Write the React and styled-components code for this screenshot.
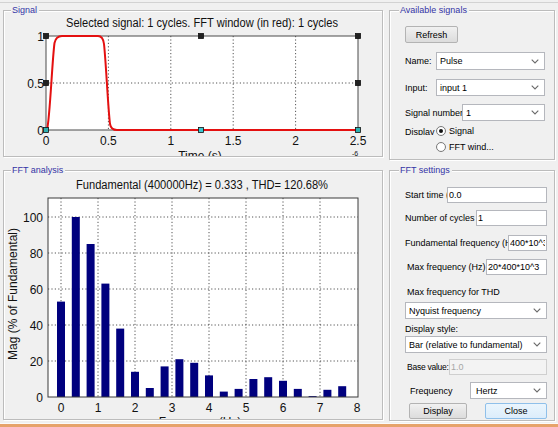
import React from "react";
import styled, { createGlobalStyle } from "styled-components";

const Global = createGlobalStyle`
  html, body {
    margin: 0;
    padding: 0;
    background: #f0f0f0;
  }
  body {
    font-family: "Liberation Sans", Arial, sans-serif;
  }
`;

const Window = styled.div`
  width: 558px;
  height: 427px;
  overflow: hidden;
  background: #f0f0f0;
  display: flex;
  flex-direction: column;
`;

const TopEdge = styled.div`
  height: 2px;
  border-bottom: 1px solid #d2d2d2;
  flex: none;
`;

const Body = styled.div`
  display: grid;
  grid-template-columns: 380px 166px;
  column-gap: 6px;
  padding: 7px 3px 0 3px;
  flex: none;
`;

const Column = styled.div`
  display: flex;
  flex-direction: column;
  gap: ${(p) => p.$gap}px;
`;

const BottomEdge = styled.div`
  margin-top: auto;
  height: 3px;
  border-top: 1px solid #fbfbfb;
  background: #e6a36b;
  flex: none;
`;

const Panel = styled.div`
  position: relative;
  box-sizing: border-box;
  height: ${(p) => p.$h}px;
  border: 1px solid #bcbcbc;
  box-shadow: inset 1px 1px 0 #ffffff, 1px 1px 0 #ffffff;
`;

const Legend = styled.span`
  position: absolute;
  top: -6px;
  left: ${(p) => p.$left || 7}px;
  padding: 0 2px 0 1px;
  background: #f0f0f0;
  color: #3434a6;
  font-size: 9px;
  line-height: 11px;
  white-space: nowrap;
`;

const Chart = styled.svg`
  display: block;
  font-family: "Liberation Sans", Arial, sans-serif;
`;

const Form = styled.div`
  display: flex;
  flex-direction: column;
  padding-left: 15px;
  font-size: 9px;
  color: #000;
`;

const Row = styled.div`
  display: flex;
  align-items: center;
  height: ${(p) => p.$h}px;
  margin-top: ${(p) => p.$mt}px;
  margin-left: ${(p) => p.$ml || 0}px;
  gap: ${(p) => p.$gap || 0}px;
`;

const FieldLabel = styled.span`
  flex: none;
  width: ${(p) => (p.$w ? `${p.$w}px` : "auto")};
  overflow: hidden;
  white-space: nowrap;
  font-size: ${(p) => p.$fs || 9}px;
  letter-spacing: ${(p) => p.$ls || 0}px;
`;

const TextBox = styled.input`
  flex: none;
  box-sizing: border-box;
  width: ${(p) => p.$w}px;
  height: 100%;
  margin: 0;
  padding: 0 1px;
  border: 1px solid ${(p) => (p.disabled ? "#cfcfcf" : "#b5b7bd")};
  background: ${(p) => (p.disabled ? "#f3f3f3" : "#ffffff")};
  color: ${(p) => (p.disabled ? "#a6a6a6" : "#000")};
  font-family: "Liberation Sans", Arial, sans-serif;
  font-size: 9px;
  outline: none;
`;

const DropDown = styled.div`
  flex: none;
  box-sizing: border-box;
  width: ${(p) => p.$w}px;
  height: 100%;
  display: flex;
  align-items: center;
  justify-content: space-between;
  padding: 0 5px 0 ${(p) => p.$pad || 3}px;
  border: 1px solid #b5b7bd;
  background: #ffffff;
  font-size: 9px;
  white-space: nowrap;
  overflow: hidden;
`;

const Button = styled.div`
  flex: none;
  box-sizing: border-box;
  width: ${(p) => p.$w}px;
  height: ${(p) => p.$h || 16}px;
  display: flex;
  align-items: center;
  justify-content: center;
  font-size: 9px;
  border: 1px solid ${(p) => (p.$focus ? "#8fc0ea" : "#b3b3b3")};
  border-radius: 2px;
  background: ${(p) =>
    p.$focus
      ? "linear-gradient(#eaf5fd, #dcedfb)"
      : "linear-gradient(#f1f1f1, #e6e6e6 50%, #dcdcdc)"};
`;

const ClippedLabel = styled.span`
  flex: none;
  width: ${(p) => p.$w}px;
  height: 7px;
  overflow: hidden;
  white-space: nowrap;
  font-size: 9px;
  line-height: 9px;
  align-self: flex-start;
  margin-top: 4px;
`;

const RadioGroup = styled.div`
  display: flex;
  flex-direction: column;
  gap: 3px;
`;

const RadioRow = styled.div`
  display: flex;
  align-items: center;
  height: 13px;
  gap: 3px;
  font-size: 9px;
`;

const RadioDot = styled.span`
  flex: none;
  box-sizing: border-box;
  width: 10px;
  height: 10px;
  border-radius: 50%;
  border: 1px solid #7a7a7a;
  background: radial-gradient(circle, #ffffff 55%, #e4e4e4);
  display: flex;
  align-items: center;
  justify-content: center;
  &::after {
    content: "";
    width: 4px;
    height: 4px;
    border-radius: 50%;
    background: ${(p) => (p.$on ? "#111" : "transparent")};
  }
`;

const Chevron = () => (
  <svg width="8" height="5" viewBox="0 0 8 5">
    <polyline points="0.7,0.7 4,4 7.3,0.7" fill="none" stroke="#6a6a6a" strokeWidth="1.1" />
  </svg>
);

const Select = ({ w, pad, children }) => (
  <DropDown $w={w} $pad={pad}>
    <span>{children}</span>
    <Chevron />
  </DropDown>
);

const GRID = { stroke: "#2a2a2a", strokeWidth: 0.8, strokeDasharray: "1.2 2.2" };

const Handle = ({ x, y, fill }) => (
  <rect x={x - 2.5} y={y - 2.5} width="5" height="5" fill={fill || "#222"} stroke="#111" strokeWidth="0.8" />
);

const SignalChart = () => {
  const sx = (t) => 46 + t * 124.8;
  const sy = (v) => 130 - v * 94;
  const xt = [0, 0.5, 1, 1.5, 2, 2.5];
  const yt = [
    [0, "0"],
    [0.5, "0.5"],
    [1, "1"],
  ];
  return (
    <Chart width="378" height="145" viewBox="4 11 378 145">
      <text x="202" y="27" fontSize="12" textAnchor="middle" textLength="272" lengthAdjust="spacingAndGlyphs" fill="#111">
        Selected signal: 1 cycles. FFT window (in red): 1 cycles
      </text>
      <rect x="46" y="36" width="312" height="94" fill="#fff" />
      {xt.slice(1, -1).map((t) => (
        <line key={t} x1={sx(t)} x2={sx(t)} y1="36" y2="130" {...GRID} />
      ))}
      <line x1="46" x2="358" y1={sy(0.5)} y2={sy(0.5)} {...GRID} />
      <rect x="46" y="36" width="312" height="94" fill="none" stroke="#4a4a4a" strokeWidth="1" />
      <path
        d="M47,130 C50,118 52,62 54.5,43 Q56,36 62,36 L98,36 Q103,36 104,44 C106,62 108,108 110,124 Q111,130 117,130 L358,130"
        fill="none"
        stroke="#e41010"
        strokeWidth="2"
      />
      {xt.map((t) => (
        <text key={t} x={sx(t)} y="145" fontSize="12" textAnchor="middle" fill="#111">
          {t}
        </text>
      ))}
      {yt.map(([v, l]) => (
        <text key={l} x="44" y={sy(v) + 4.5} fontSize="12" textAnchor="end" fill="#111">
          {l}
        </text>
      ))}
      <text x="200" y="160" fontSize="12" textAnchor="middle" fill="#111">
        Time (s)
      </text>
      <text x="355" y="156" fontSize="7" textAnchor="middle" fill="#111">
        -6
      </text>
      <Handle x={46} y={36} />
      <Handle x={201} y={36} />
      <Handle x={358} y={36} />
      <Handle x={46} y={83} />
      <Handle x={358} y={83} />
      <Handle x={46} y={130} fill="#2fb0b0" />
      <Handle x={201} y={130} fill="#3cc6d0" />
      <Handle x={358} y={130} fill="#2fb0b0" />
    </Chart>
  );
};

const BARS = [53, 100, 85, 63, 38, 14, 5, 17, 21, 19, 12, 3, 4.5, 10, 11, 9, 4.5, 0.5, 4, 6];

const FFTChart = () => {
  const fx = (f) => 61 + f * 37;
  const fy = (v) => 397 - v * 1.8;
  const xt = [0, 1, 2, 3, 4, 5, 6, 7, 8];
  const yt = [0, 20, 40, 60, 80, 100];
  return (
    <Chart width="378" height="248" viewBox="4 171 378 248">
      <text x="202" y="189" fontSize="12" textAnchor="middle" textLength="252" lengthAdjust="spacingAndGlyphs" fill="#111">
        Fundamental (400000Hz) = 0.333 , THD= 120.68%
      </text>
      <rect x="48" y="198" width="310" height="199" fill="#fff" />
      {xt.slice(0, -1).map((f) => (
        <line key={f} x1={fx(f)} x2={fx(f)} y1="198" y2="397" {...GRID} />
      ))}
      {yt.slice(1).map((v) => (
        <line key={v} x1="48" x2="358" y1={fy(v)} y2={fy(v)} {...GRID} />
      ))}
      {BARS.map((v, i) => (
        <rect key={i} x={fx(i * 0.4) - 4} y={fy(v)} width="8" height={v * 1.8} fill="#00007e" />
      ))}
      <rect x="48" y="198" width="310" height="199" fill="none" stroke="#3a3a3a" strokeWidth="1" />
      {xt.map((f) => (
        <text key={f} x={fx(f)} y="412" fontSize="12" textAnchor="middle" fill="#111">
          {f}
        </text>
      ))}
      {yt.map((v) => (
        <text key={v} x="43" y={fy(v) + 4.5} fontSize="12" textAnchor="end" fill="#111">
          {v}
        </text>
      ))}
      <text
        x="0"
        y="0"
        fontSize="12"
        textAnchor="middle"
        fill="#111"
        transform="translate(17 294) rotate(-90)"
      >
        Mag (% of Fundamental)
      </text>
      <text x="200" y="425.5" fontSize="12" textAnchor="middle" fill="#111">
        Frequency (Hz)
      </text>
      <text x="355" y="425" fontSize="7" textAnchor="middle" fill="#111">
        6
      </text>
    </Chart>
  );
};

const AvailableSignals = () => (
  <Panel $h={150}>
    <Legend $left={9}>Available signals</Legend>
    <Form>
      <Row $h={17} $mt={15}>
        <Button $w={53} $h={17}>Refresh</Button>
      </Row>
      <Row $h={18} $mt={9}>
        <FieldLabel $w={31}>Name:</FieldLabel>
        <Select w={109}>Pulse</Select>
      </Row>
      <Row $h={17} $mt={9}>
        <FieldLabel $w={31}>Input:</FieldLabel>
        <Select w={109}>input 1</Select>
      </Row>
      <Row $h={17} $mt={8}>
        <FieldLabel $w={57}>Signal number</FieldLabel>
        <Select w={83}>1</Select>
      </Row>
      <Row $h={30} $mt={3}>
        <ClippedLabel $w={31}>Display</ClippedLabel>
        <RadioGroup>
          <RadioRow>
            <RadioDot $on />
            Signal
          </RadioRow>
          <RadioRow>
            <RadioDot />
            FFT wind...
          </RadioRow>
        </RadioGroup>
      </Row>
    </Form>
  </Panel>
);

const FFTSettings = () => (
  <Panel $h={251}>
    <Legend $left={9}>FFT settings</Legend>
    <Form>
      <Row $h={16} $mt={16}>
        <FieldLabel $w={42}>Start time (s)</FieldLabel>
        <TextBox $w={100} defaultValue="0.0" readOnly />
      </Row>
      <Row $h={16} $mt={7}>
        <FieldLabel $w={71}>Number of cycles</FieldLabel>
        <TextBox $w={71} defaultValue="1" readOnly />
      </Row>
      <Row $h={16} $mt={9}>
        <FieldLabel $w={103}>Fundamental frequency (Hz)</FieldLabel>
        <TextBox $w={39} defaultValue="400*10^3" readOnly />
      </Row>
      <Row $h={16} $mt={8} $ml={2}>
        <FieldLabel $w={79}>Max frequency (Hz)</FieldLabel>
        <TextBox $w={61} defaultValue="20*400*10^3" readOnly />
      </Row>
      <Row $h={12} $mt={11} $ml={2}>
        <FieldLabel>Max frequency for THD</FieldLabel>
      </Row>
      <Row $h={17} $mt={4}>
        <Select w={142}>Nyquist frequency</Select>
      </Row>
      <Row $h={12} $mt={4}>
        <FieldLabel>Display style:</FieldLabel>
      </Row>
      <Row $h={17} $mt={1}>
        <Select w={142}>Bar (relative to fundamental)</Select>
      </Row>
      <Row $h={16} $mt={6} $ml={2}>
        <FieldLabel $w={42} $fs={8.5} $ls={-0.25}>
          Base value:
        </FieldLabel>
        <TextBox $w={98} defaultValue="1.0" disabled />
      </Row>
      <Row $h={17} $mt={7} $ml={5}>
        <FieldLabel $w={60}>Frequency</FieldLabel>
        <Select w={77} pad={5}>Hertz</Select>
      </Row>
      <Row $h={16} $mt={4} $ml={4} $gap={18}>
        <Button $w={58}>Display</Button>
        <Button $w={62} $focus>
          Close
        </Button>
      </Row>
    </Form>
  </Panel>
);

export default function App() {
  return (
    <Window>
      <Global />
      <TopEdge />
      <Body>
        <Column $gap={13}>
          <Panel $h={147}>
            <Legend>Signal</Legend>
            <SignalChart />
          </Panel>
          <Panel $h={250}>
            <Legend>FFT analysis</Legend>
            <FFTChart />
          </Panel>
        </Column>
        <Column $gap={10}>
          <AvailableSignals />
          <FFTSettings />
        </Column>
      </Body>
      <BottomEdge />
    </Window>
  );
}
